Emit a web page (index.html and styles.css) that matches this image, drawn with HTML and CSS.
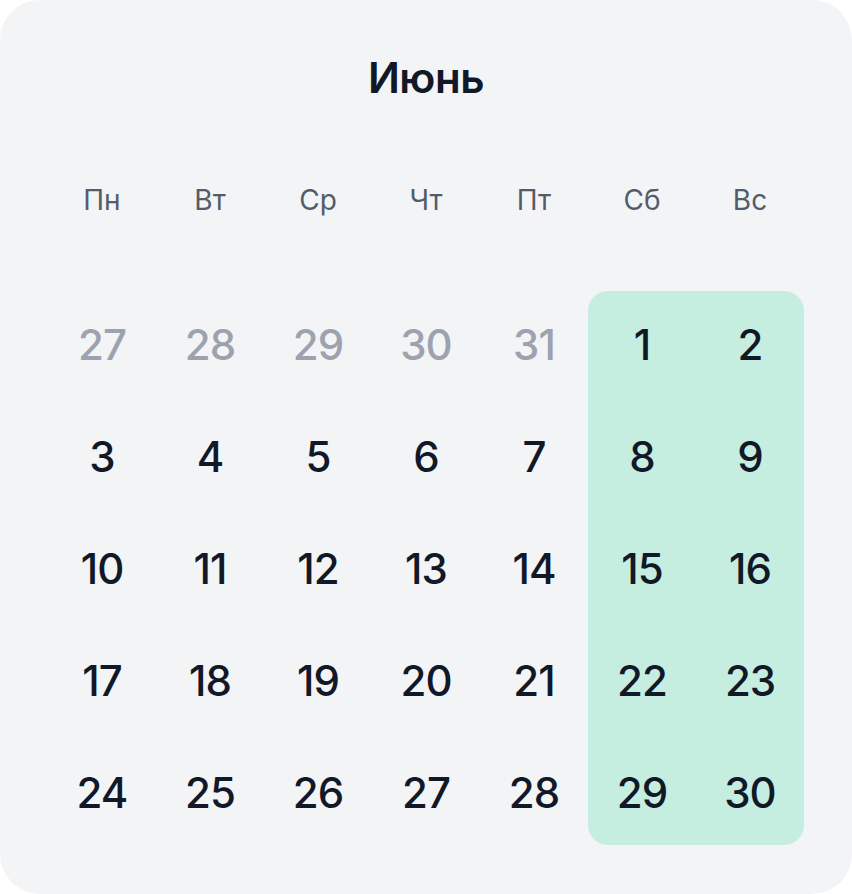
FILE: index.html
```html
<!DOCTYPE html>
<html lang="ru">
<head>
<meta charset="utf-8">
<title>Календарь — Июнь</title>
<link rel="stylesheet" href="styles.css">
</head>
<body>
<div class="card">
  <h1 class="title">Июнь</h1>
  <div class="weekdays">
    <span>Пн</span><span>Вт</span><span>Ср</span><span>Чт</span><span>Пт</span><span>Сб</span><span>Вс</span>
  </div>
  <div class="month">
    <div class="layer">
      <div class="weekend"></div>
    </div>
    <div class="grid">
      <span class="day muted">27</span><span class="day muted">28</span><span class="day muted">29</span><span class="day muted">30</span><span class="day muted">31</span><span class="day">1</span><span class="day">2</span>
      <span class="day">3</span><span class="day">4</span><span class="day">5</span><span class="day">6</span><span class="day">7</span><span class="day">8</span><span class="day">9</span>
      <span class="day">10</span><span class="day">11</span><span class="day">12</span><span class="day">13</span><span class="day">14</span><span class="day">15</span><span class="day">16</span>
      <span class="day">17</span><span class="day">18</span><span class="day">19</span><span class="day">20</span><span class="day">21</span><span class="day">22</span><span class="day">23</span>
      <span class="day">24</span><span class="day">25</span><span class="day">26</span><span class="day">27</span><span class="day">28</span><span class="day">29</span><span class="day">30</span>
    </div>
  </div>
</div>
</body>
</html>
```

FILE: styles.css
```css
* { box-sizing: border-box; }
html, body {
  margin: 0;
  padding: 0;
  background: #ffffff;
}
body {
  font-family: Inter, "Noto Sans", "DejaVu Sans", sans-serif;
}
.card {
  width: 852px;
  height: 894px;
  background: #f3f4f6;
  border-radius: 40px;
  padding: 0 48px;
}
.title {
  margin: 0;
  height: 155px;
  display: flex;
  align-items: center;
  justify-content: center;
  font-size: 42px;
  font-weight: 600;
  letter-spacing: -0.5px;
  color: #111827;
}
.weekdays {
  height: 90px;
  margin-bottom: 43px;
  display: grid;
  grid-template-columns: repeat(7, 108px);
  align-items: center;
}
.weekdays span {
  text-align: center;
  font-size: 28px;
  font-weight: 400;
  color: #535c6a;
}
.month {
  display: grid;
}
.layer,
.grid {
  grid-area: 1 / 1;
  display: grid;
  grid-template-columns: repeat(7, 108px);
  grid-template-rows: repeat(5, 112px);
}
.weekend {
  grid-column: 6 / 8;
  grid-row: 1 / 6;
  margin: 3px 0;
  background: #c6eee0;
  border-radius: 20px;
}
.day {
  display: flex;
  align-items: center;
  justify-content: center;
  font-size: 42px;
  font-weight: 500;
  letter-spacing: -1px;
  color: #111827;
}
.day.muted { color: #9ca3af; }
```
